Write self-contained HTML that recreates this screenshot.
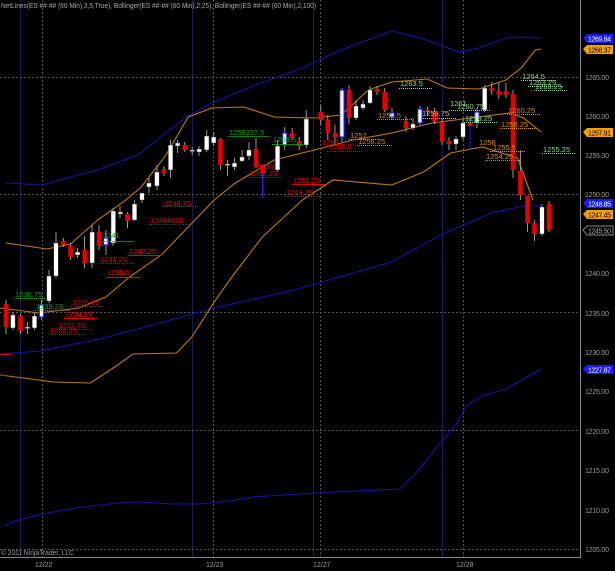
<!DOCTYPE html>
<html><head><meta charset="utf-8"><style>
html,body{margin:0;padding:0;background:#000;}
svg{display:block;font-family:"Liberation Sans",sans-serif;}
</style></head><body>
<svg width="615" height="571" viewBox="0 0 615 571" xmlns="http://www.w3.org/2000/svg">
<rect width="615" height="571" fill="#000"/>
<g stroke="#1c1c55" stroke-width="1">
<line x1="20.5" y1="0" x2="20.5" y2="557"/><line x1="192.5" y1="0" x2="192.5" y2="557"/>
<line x1="313.5" y1="0" x2="313.5" y2="557"/><line x1="442.5" y1="0" x2="442.5" y2="557"/>
</g>
<g stroke="#555" stroke-width="1" stroke-dasharray="2,2">
<line x1="42.5" y1="0" x2="42.5" y2="557"/><line x1="213.5" y1="0" x2="213.5" y2="557"/>
<line x1="320.5" y1="0" x2="320.5" y2="557"/><line x1="463.5" y1="0" x2="463.5" y2="557"/>
<line x1="0" y1="77.5" x2="580" y2="77.5"/><line x1="0" y1="194.5" x2="580" y2="194.5"/>
<line x1="0" y1="312.5" x2="580" y2="312.5"/><line x1="0" y1="430.5" x2="580" y2="430.5"/>
<line x1="0" y1="549.5" x2="580" y2="549.5"/>
</g>
<line x1="580.5" y1="0" x2="580.5" y2="557" stroke="#888"/>
<line x1="0" y1="557.5" x2="581" y2="557.5" stroke="#888"/>
<g fill="#999" font-size="7">
<text x="585" y="80" textLength="24">1265.00</text><text x="585" y="119" textLength="24">1260.00</text><text x="585" y="158" textLength="24">1255.00</text>
<text x="585" y="197" textLength="24">1250.00</text><text x="585" y="276" textLength="24">1240.00</text>
<text x="585" y="316" textLength="24">1235.00</text><text x="585" y="355" textLength="24">1230.00</text><text x="585" y="394" textLength="24">1225.00</text>
<text x="585" y="434" textLength="24">1220.00</text><text x="585" y="473" textLength="24">1215.00</text><text x="585" y="513" textLength="24">1210.00</text>
<text x="585" y="552" textLength="24">1205.00</text>
</g>
<g font-size="7" fill="#999">
<text x="35" y="567">12/22</text><text x="206" y="567">12/23</text><text x="313" y="567">12/27</text><text x="456" y="567">12/28</text>
</g>
<g font-size="7">
<path d="M583 38 L587 34 L613 34 L613 43 L587 43 Z" fill="#1a1aff"/><text x="588" y="41.5" fill="#fff" textLength="23">1269.84</text>
<path d="M583 49 L587 45 L613 45 L613 54 L587 54 Z" fill="#f5a000"/><text x="588" y="52.5" fill="#000" textLength="23">1268.37</text>
<path d="M583 132 L587 128 L613 128 L613 137 L587 137 Z" fill="#f5a000"/><text x="588" y="135.5" fill="#000" textLength="23">1257.91</text>
<path d="M583 203 L587 199 L613 199 L613 208 L587 208 Z" fill="#1a1aff"/><text x="588" y="206.5" fill="#fff" textLength="23">1248.85</text>
<path d="M583 214 L587 210 L613 210 L613 219 L587 219 Z" fill="#f5a000"/><text x="588" y="217.5" fill="#000" textLength="23">1247.45</text>
<path d="M583 230 L587 226 L613 226 L613 235 L587 235 Z" fill="#000" stroke="#888"/><text x="588" y="233.5" fill="#aaa" textLength="23">1245.50</text>
<path d="M583 369 L587 365 L613 365 L613 374 L587 374 Z" fill="#1a1aff"/><text x="588" y="372.5" fill="#fff" textLength="23">1227.87</text>
</g>
<g fill="none" stroke-width="1.1" transform="scale(1.1765,1)">
<polyline stroke="#1414a8" vector-effect="non-scaling-stroke" points="5,183 37,185 50,180 83,170 117,155 157,118 180,103 217,85 253,70 290,50 333,31 360,39 390,52 407,48 433,37 460,38"/>
<polyline stroke="#1414a8" vector-effect="non-scaling-stroke" points="0,354 34,351 85,339 130,325 175,310 250,290 330,263 380,232 420,212 450,205 460,207"/>
<polyline stroke="#1414a8" vector-effect="non-scaling-stroke" points="4,526 13,521 35,514 70,507 100,503 120,502 145,504 170,504 195,501 215,497 240,495 268,493 285,492 340,489 356,470 372,446 388,424 397,405 410,396 430,389 460,369"/>
<polyline stroke="#c07a10" vector-effect="non-scaling-stroke" points="5,243 40,249 60,244 83,220 107,200 120,187 140,157 160,117 180,108 207,107 233,117 267,118 290,115 313,90 333,82 363,79 380,88 407,89 430,80 443,68 455,50 460,49"/>
<polyline stroke="#c07a10" vector-effect="non-scaling-stroke" points="0,308 33,313 67,308 90,297 110,277 137,255 160,227 182,200 200,183 233,160 267,150 300,140 333,133 367,123 400,118 433,113 445,118 460,132"/>
<polyline stroke="#c07a10" vector-effect="non-scaling-stroke" points="0,375 20,378 45,382 77,383 100,365 113,354 150,353 163,337 182,302 197,277 223,237 257,200 283,180 333,185 360,172 383,153 410,147 440,158 453,200"/>
</g>
<g stroke="#999" stroke-width="1">
<path d="M6 300V334M13 312V330M20.5 314V334M27.5 322V334M34.5 313V330M41.5 300V320M49 270V303M56 232V278M63.5 238V247M70.5 243V260M77.5 248V258M84.5 236V268M92 225V268M99 225V250M106 230V255M113 208V246M120 206V218M127.5 212V228M134.5 200V221M142 194V203M149 178V193M157 165V190M164 166V176M170.5 140V178M177.6 140V153M184.7 142V152M192.2 147V155M199 146V156M206.7 130V152M213.7 132V146M220.4 138V170M227.5 160V176M234.5 158V170M242 150V162M249 142V160M256 138V168M262.7 165V198M277.6 140V172M284.7 127V150M292.2 128V140M299.2 137V150M306.3 110V148M320.8 105V125M327.8 115V140M334.9 125V146M342 88V142M349 85V124M356 100V120M363 100V110M370 86V104M377 86V95M384.7 88V112M392 108V120M406 116V132M413 118V130M420 106V125M427.5 107V115M434.5 108V124M442 118V145M449 137V150M456 136V150M463 118V140M470 117V150M477 108V128M484.7 85V112M491.8 82V95M498.8 83V99M505.9 83V98M513 90V178M520.4 150V200M527.5 196V232M534.5 220V241M542 204V236M549 201V232"/>
</g>
<g fill="#e80000">
<rect x="3.7" y="304" width="4.6" height="23"/><rect x="18.2" y="316" width="4.6" height="15"/>
<rect x="61.2" y="241" width="4.6" height="4"/><rect x="68.3" y="246" width="4.6" height="11"/>
<rect x="82.4" y="250" width="4.6" height="13"/><rect x="96.7" y="232" width="4.6" height="14"/>
<rect x="125.2" y="214" width="4.6" height="7"/><rect x="161.6" y="169" width="4.6" height="4"/>
<rect x="182.4" y="145" width="4.6" height="5"/><rect x="218.1" y="139" width="4.6" height="26"/>
<rect x="253.7" y="149" width="4.6" height="18"/><rect x="289.9" y="133" width="4.6" height="5"/>
<rect x="296.9" y="141" width="4.6" height="5"/><rect x="318.5" y="112" width="4.6" height="8"/>
<rect x="325.5" y="120" width="4.6" height="13"/><rect x="332.6" y="133" width="4.6" height="4"/>
<rect x="346.7" y="90" width="4.6" height="28"/><rect x="374.7" y="89" width="4.6" height="3"/>
<rect x="382.4" y="92" width="4.6" height="18"/><rect x="403.6" y="121" width="4.6" height="7"/>
<rect x="425.2" y="110" width="4.6" height="2"/><rect x="432.2" y="112" width="4.6" height="9"/>
<rect x="439.7" y="122" width="4.6" height="20"/><rect x="446.7" y="141" width="4.6" height="3"/>
<rect x="489.5" y="88" width="4.6" height="3"/><rect x="496.5" y="91" width="4.6" height="4"/>
<rect x="503.6" y="91" width="4.6" height="4"/><rect x="510.7" y="94" width="4.6" height="76"/>
<rect x="518.1" y="171" width="4.6" height="24"/><rect x="525.2" y="196" width="4.6" height="27"/>
<rect x="532.2" y="223" width="4.6" height="11"/><rect x="546.7" y="204" width="4.6" height="26"/>
</g>
<g fill="#fff" stroke="#333" stroke-width="0.5">
<rect x="10.6" y="315" width="4.6" height="13"/><rect x="25.2" y="327" width="4.6" height="1.5"/>
<rect x="32.2" y="316" width="4.6" height="12"/><rect x="46.7" y="276" width="4.6" height="25"/>
<rect x="53.7" y="243" width="4.6" height="33"/><rect x="75.3" y="252" width="4.6" height="3"/>
<rect x="89.9" y="232" width="4.6" height="31"/><rect x="111" y="211" width="4.6" height="32"/>
<rect x="118.1" y="212" width="4.6" height="2"/><rect x="132.2" y="204" width="4.6" height="16"/>
<rect x="139.7" y="193" width="4.6" height="7"/><rect x="146.7" y="183" width="4.6" height="4"/>
<rect x="154.6" y="172" width="4.6" height="14"/><rect x="168.3" y="145" width="4.6" height="25"/>
<rect x="175.3" y="143" width="4.6" height="3"/><rect x="189.9" y="150" width="4.6" height="1.5"/>
<rect x="196.9" y="149" width="4.6" height="3"/><rect x="204.4" y="136" width="4.6" height="14"/>
<rect x="211.4" y="137" width="4.6" height="6"/><rect x="225.2" y="164" width="4.6" height="1.5"/>
<rect x="232.2" y="163" width="4.6" height="4"/><rect x="239.7" y="157" width="4.6" height="4"/>
<rect x="246.7" y="150" width="4.6" height="6"/><rect x="275.3" y="146" width="4.6" height="24"/>
<rect x="304" y="119" width="4.6" height="26"/><rect x="353.7" y="106" width="4.6" height="12"/>
<rect x="360.7" y="104" width="4.6" height="4"/><rect x="367.7" y="90" width="4.6" height="13"/>
<rect x="410.7" y="124" width="4.6" height="4"/><rect x="453.7" y="139" width="4.6" height="5"/>
<rect x="460.7" y="123" width="4.6" height="14"/><rect x="482.4" y="88" width="4.6" height="22"/>
<rect x="539.7" y="207" width="4.6" height="27"/>
</g>
<g fill="#fff" stroke="#1a1aff" stroke-width="1.2">
<rect x="39.3" y="305" width="4.4" height="12"/><rect x="103.6" y="238" width="4.4" height="7"/>
<rect x="282.4" y="133" width="4.4" height="12"/><rect x="339.7" y="90" width="4.4" height="47"/>
<rect x="389.6" y="113" width="4.4" height="4"/><rect x="417.7" y="109" width="4.4" height="14"/>
<rect x="474.7" y="112" width="4.4" height="11"/>
</g>
<g fill="#e80000"><rect x="260.4" y="166" width="4.6" height="7"/><rect x="467.7" y="123" width="4.6" height="3"/></g>
<line x1="262.7" y1="173" x2="262.7" y2="198" stroke="#1a1aff"/>
<line x1="470" y1="126" x2="470" y2="150" stroke="#1a1aff"/>
<g font-size="7.5" stroke-width="1" stroke-dasharray="1,1">
<g fill="#e00" stroke="#e00">
<text x="164" y="206" stroke="none">1248.75</text><line x1="163" y1="206.5" x2="198" y2="206.5"/>
<text x="150" y="223" stroke="none">12484825</text><line x1="149" y1="224.5" x2="190" y2="224.5"/>
<text x="129" y="254" stroke="none">1242.25</text><line x1="128" y1="255.5" x2="162" y2="255.5"/>
<text x="100" y="262" stroke="none">1241.25</text><line x1="99" y1="263.5" x2="134" y2="263.5"/>
<text x="107" y="275" stroke="none">1239.5</text><line x1="106" y1="277.5" x2="140" y2="277.5"/>
<text x="72" y="305" stroke="none">1235.75</text><line x1="71" y1="306.5" x2="105" y2="306.5"/>
<text x="65" y="317" stroke="none">1234.25</text><line x1="64" y1="318.5" x2="98" y2="318.5"/>
<text x="58" y="328" stroke="none">1232.75</text><line x1="57" y1="329.5" x2="92" y2="329.5"/>
<text x="50" y="333" stroke="none">1232.25</text><line x1="49" y1="334.5" x2="84" y2="334.5"/>
<text x="258" y="169" stroke="none">1253</text>
<text x="250" y="176" stroke="none">1252.25</text><line x1="249" y1="177.5" x2="283" y2="177.5"/>
<text x="293" y="183" stroke="none">1251.25</text><line x1="292" y1="184.5" x2="326" y2="184.5"/>
<text x="286" y="195" stroke="none">1249.75</text><line x1="285" y1="196.5" x2="320" y2="196.5"/>
<text x="322" y="145" stroke="none">1256</text>
<text x="329" y="149" stroke="none">1255.5</text><line x1="327" y1="151.5" x2="362" y2="151.5"/>
<line x1="0" y1="354.5" x2="12" y2="354.5"/><line x1="0" y1="375.5" x2="8" y2="375.5"/>
</g>
<g fill="#e08a00" stroke="#e08a00">
<text x="350" y="138" stroke="none">1257</text><line x1="349" y1="139.5" x2="380" y2="139.5"/>
<text x="358" y="144" stroke="none">1256.25</text><line x1="357" y1="145.5" x2="392" y2="145.5"/>
<text x="378" y="118" stroke="none">1259.5</text><line x1="377" y1="119.5" x2="412" y2="119.5"/>
<text x="508" y="113" stroke="none">1260.25</text><line x1="507" y1="114.5" x2="541" y2="114.5"/>
<text x="501" y="127" stroke="none">1258.25</text><line x1="500" y1="128.5" x2="535" y2="128.5"/>
<text x="479" y="145" stroke="none">1256</text>
<text x="493" y="150" stroke="none">1255.5</text><line x1="490" y1="151.5" x2="526" y2="151.5"/>
<text x="486" y="159" stroke="none">1254.25</text><line x1="485" y1="160.5" x2="520" y2="160.5"/>
</g>
<g fill="#8fd88f" stroke="#8fd88f">
<text x="400" y="86" stroke="none">1263.5</text><line x1="399" y1="88.5" x2="433" y2="88.5"/>
<text x="522" y="79" stroke="none">1264.5</text><line x1="521" y1="80.5" x2="556" y2="80.5"/>
<text x="529" y="85" stroke="none">1263.25</text><line x1="528" y1="86.5" x2="563" y2="86.5"/>
<text x="535" y="89" stroke="none">1263.25</text><line x1="534" y1="90.5" x2="568" y2="90.5"/>
<text x="450" y="106" stroke="none">1261</text>
<text x="457" y="109" stroke="none">1260.75</text><line x1="449" y1="110.5" x2="490" y2="110.5"/>
<text x="422" y="116" stroke="none">1259.75</text><line x1="421" y1="118.5" x2="456" y2="118.5"/>
<text x="465" y="121" stroke="none">1259.25</text><line x1="464" y1="122.5" x2="498" y2="122.5"/>
<text x="543" y="152" stroke="none">1255.25</text><line x1="542" y1="153.5" x2="576" y2="153.5"/>
</g>
<g fill="#14a014" stroke="#14a014">
<text x="229" y="135" stroke="none">1258257.5</text><line x1="228" y1="136.5" x2="270" y2="136.5"/>
<text x="273" y="142" stroke="none">1258.5</text><line x1="272" y1="144.5" x2="303" y2="144.5"/>
<text x="15" y="297" stroke="none">1236.75</text><line x1="14" y1="298.5" x2="46" y2="298.5"/>
<text x="36" y="309" stroke="none">1235.25</text><line x1="35" y1="310.5" x2="70" y2="310.5"/>
<text x="103" y="238" stroke="none">1241</text><line x1="102" y1="241.5" x2="134" y2="241.5"/>
</g>
</g>
<text x="1" y="8" font-size="7.5" fill="#aaa" textLength="315" lengthAdjust="spacingAndGlyphs">NetLines(ES ##-## (60 Min),3,5,True), Bollinger(ES ##-## (60 Min),2,25), Bollinger(ES ##-## (60 Min),2,100)</text>
<text x="1" y="555" font-size="7.5" fill="#999" textLength="73" lengthAdjust="spacingAndGlyphs">© 2011 NinjaTrader, LLC</text>
</svg>
</body></html>
